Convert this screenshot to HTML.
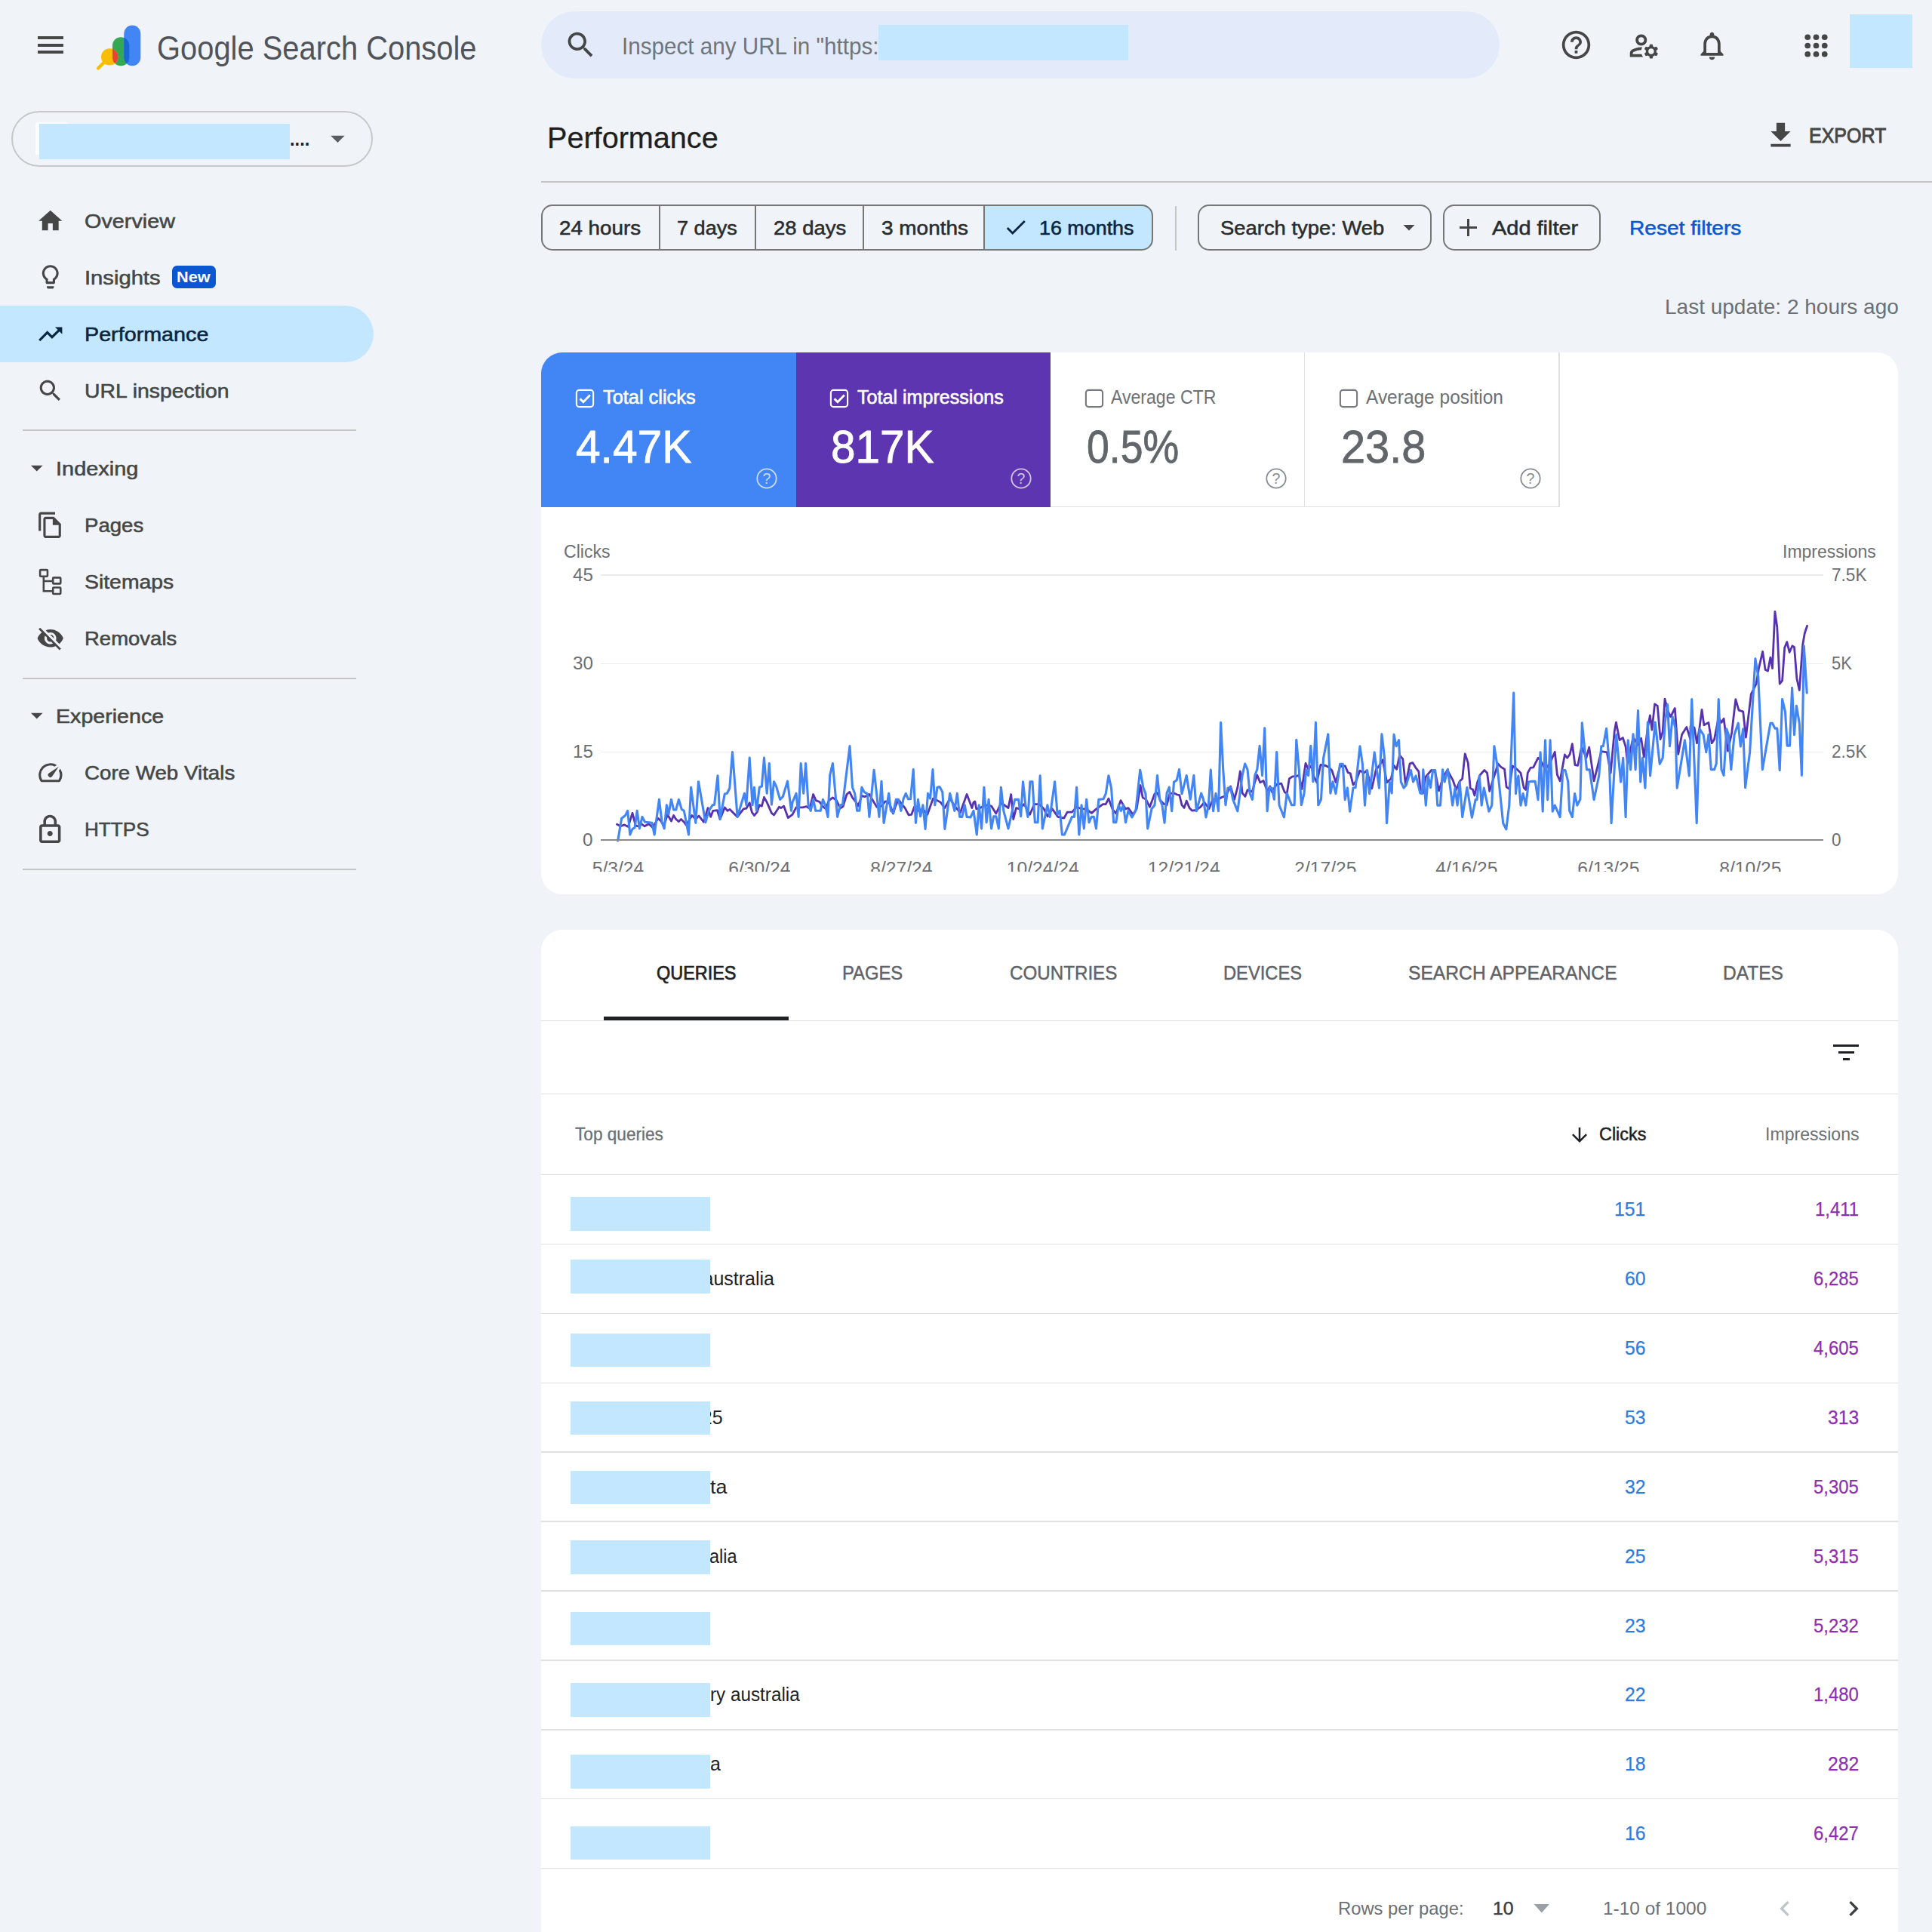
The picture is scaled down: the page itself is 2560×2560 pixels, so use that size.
<!DOCTYPE html>
<html lang="en"><head><meta charset="utf-8"><title>Performance</title>
<style>
html,body{margin:0;padding:0;}
body{width:2560px;height:2560px;overflow:hidden;background:#f0f4f9;position:relative;font-family:'Liberation Sans', sans-serif;}
.t{position:absolute;white-space:pre;line-height:1;transform-origin:0 0;font-family:'Liberation Sans', sans-serif;}
.a{position:absolute;}
svg{position:absolute;overflow:visible;}
</style></head><body>
<div class="a" style="left:50.2px;top:48.4px;width:33.60px;height:4.10px;background:#444746;"></div>
<div class="a" style="left:50.2px;top:57.8px;width:33.60px;height:4.10px;background:#444746;"></div>
<div class="a" style="left:50.2px;top:67.1px;width:33.60px;height:4.10px;background:#444746;"></div>
<svg style="left:120px;top:28px" width="75" height="70" viewBox="120 28 75 70">
<rect x="149" y="49.3" width="22.3" height="38" rx="11.15" fill="#34a853"/>
<rect x="164.3" y="33.5" width="22" height="53.8" rx="11" fill="#4285f4"/>
<clipPath id="cg"><rect x="149" y="49.3" width="22.3" height="38" rx="11.15"/></clipPath>
<rect x="164.3" y="33.5" width="22" height="53.8" rx="11" fill="#1967d2" clip-path="url(#cg)"/>
<line x1="137.5" y1="83" x2="130" y2="90.5" stroke="#fbbc04" stroke-width="4.4" stroke-linecap="round"/>
<circle cx="145.2" cy="75.4" r="11.2" fill="#fbbc04"/>
<circle cx="145.2" cy="75.4" r="11.2" fill="#ea4335" clip-path="url(#cg)"/>
</svg>
<div class="a" style="left:716.5px;top:14.5px;width:1270.30px;height:89.90px;background:#e3ebfb;border-radius:45px;"></div>
<svg style="left:747.20px;top:37.20px" width="45" height="45" viewBox="0 0 24 24"><path fill="#444746"  d="M15.5 14h-.79l-.28-.27C15.41 12.59 16 11.11 16 9.5 16 5.91 13.09 3 9.5 3S3 5.91 3 9.5 5.91 16 9.5 16c1.61 0 3.09-.59 4.23-1.57l.27.28v.79l5 4.99L20.49 19l-4.99-5zm-6 0C7.01 14 5 11.99 5 9.5S7.01 5 9.5 5 14 7.01 14 9.5 11.99 14 9.5 14z"/></svg>
<svg style="left:2065.70px;top:37.30px" width="45" height="45" viewBox="0 0 24 24"><path fill="#444746"  d="M11 18h2v-2h-2v2zm1-16C6.48 2 2 6.48 2 12s4.48 10 10 10 10-4.48 10-10S17.52 2 12 2zm0 18c-4.41 0-8-3.59-8-8s3.59-8 8-8 8 3.59 8 8-3.59 8-8 8zm0-14c-2.21 0-4 1.79-4 4h2c0-1.1.9-2 2-2s2 .9 2 2c0 2-3 1.75-3 5h2c0-2.25 3-2.5 3-5 0-2.21-1.79-4-4-4z"/></svg>
<svg style="left:2156.00px;top:37.50px" width="45" height="45" viewBox="0 0 24 24"><path fill="#444746"  d="M4 18v-.65c0-.34.16-.66.41-.81C6.1 15.53 8.03 15 10 15c.03 0 .05 0 .08.01.1-.7.3-1.37.59-1.98-.22-.02-.44-.03-.67-.03-2.42 0-4.68.67-6.61 1.82-.88.52-1.39 1.5-1.39 2.53V20h9.26c-.42-.6-.75-1.28-.97-2H4zM10 12c2.21 0 4-1.79 4-4s-1.79-4-4-4-4 1.79-4 4 1.79 4 4 4zm0-6c1.1 0 2 .9 2 2s-.9 2-2 2-2-.9-2-2 .9-2 2-2zM20.75 16c0-.22-.03-.42-.06-.63l1.14-1.01-1-1.73-1.45.49c-.32-.27-.68-.48-1.08-.63L18 11h-2l-.3 1.49c-.4.15-.76.36-1.08.63l-1.45-.49-1 1.73 1.14 1.01c-.03.21-.06.41-.06.63s.03.42.06.63l-1.14 1.01 1 1.73 1.45-.49c.32.27.68.48 1.08.63L16 21h2l.3-1.49c.4-.15.76-.36 1.08-.63l1.45.49 1-1.73-1.14-1.01c.03-.21.06-.41.06-.63zM17 18c-1.1 0-2-.9-2-2s.9-2 2-2 2 .9 2 2-.9 2-2 2z"/></svg>
<svg style="left:2245.50px;top:37.50px" width="45" height="45" viewBox="0 0 24 24"><path fill="#444746"  d="M12 22c1.1 0 2-.9 2-2h-4c0 1.1.9 2 2 2zm6-6v-5c0-3.07-1.63-5.64-4.5-6.32V4c0-.83-.67-1.5-1.5-1.5s-1.5.67-1.5 1.5v.68C7.64 5.36 6 7.92 6 11v5l-2 2v1h16v-1l-2-2zm-2 1H8v-6c0-2.48 1.51-4.5 4-4.5s4 2.02 4 4.5v6z"/></svg>
<svg style="left:2384.3px;top:37.8px" width="45" height="45" viewBox="0 0 24 24" fill="#444746"><circle cx="6" cy="6" r="2.05"/><circle cx="6" cy="12" r="2.05"/><circle cx="6" cy="18" r="2.05"/><circle cx="12" cy="6" r="2.05"/><circle cx="12" cy="12" r="2.05"/><circle cx="12" cy="18" r="2.05"/><circle cx="18" cy="6" r="2.05"/><circle cx="18" cy="12" r="2.05"/><circle cx="18" cy="18" r="2.05"/></svg>
<div class="a" style="left:2450.6px;top:18.8px;width:83.40px;height:71.10px;background:#c2e7ff;"></div>
<div class="a" style="left:14.5px;top:146.5px;width:479.00px;height:74.00px;background:transparent;border:2.1px solid #c6c9c8;border-radius:38px;box-sizing:border-box;"></div>
<div class="a" style="left:47.3px;top:161.5px;width:43.20px;height:43.20px;background:rgba(255,255,255,.8);border-radius:3px;"></div>
<svg style="left:436px;top:177px" width="24" height="14" viewBox="436 177 24 14"><path d="M438.2 179.7h18.5l-9.25 9.4z" fill="#5a5d60"/></svg>
<div class="a" style="left:0px;top:405px;width:494.60px;height:74.80px;background:#c2e7ff;border-radius:0 38px 38px 0;"></div>
<div class="a" style="left:228.2px;top:352.4px;width:58.10px;height:30.00px;background:#0b57d0;border-radius:6.5px;"></div>
<svg style="left:48.25px;top:273.95px" width="37.5" height="37.5" viewBox="0 0 24 24"><path fill="#444746"  d="M10 20v-6h4v6h5v-8h3L12 3 2 12h3v8z"/></svg>
<svg style="left:48.25px;top:348.45px" width="37.5" height="37.5" viewBox="0 0 24 24"><path fill="#444746"  d="M9 21c0 .55.45 1 1 1h4c.55 0 1-.45 1-1v-1H9v1zm3-19C8.14 2 5 5.14 5 9c0 2.38 1.19 4.47 3 5.74V17c0 .55.45 1 1 1h6c.55 0 1-.45 1-1v-2.26c1.81-1.27 3-3.36 3-5.74 0-3.86-3.14-7-7-7zm2.85 11.1l-.85.6V16h-4v-2.3l-.85-.6C7.8 12.16 7 10.63 7 9c0-2.76 2.24-5 5-5s5 2.24 5 5c0 1.63-.8 3.16-2.15 4.1z"/></svg>
<svg style="left:48.25px;top:423.55px" width="37.5" height="37.5" viewBox="0 0 24 24"><path fill="#0a2540"  d="M16 6l2.29 2.29-4.88 4.88-4-4L2 16.59 3.41 18l6-6 4 4 6.3-6.29L22 12V6z"/></svg>
<svg style="left:48.25px;top:498.65px" width="37.5" height="37.5" viewBox="0 0 24 24"><path fill="#444746"  d="M15.5 14h-.79l-.28-.27C15.41 12.59 16 11.11 16 9.5 16 5.91 13.09 3 9.5 3S3 5.91 3 9.5 5.91 16 9.5 16c1.61 0 3.09-.59 4.23-1.57l.27.28v.79l5 4.99L20.49 19l-4.99-5zm-6 0C7.01 14 5 11.99 5 9.5S7.01 5 9.5 5 14 7.01 14 9.5 11.99 14 9.5 14z"/></svg>
<div class="a" style="left:30px;top:569.3px;width:441.70px;height:1.80px;background:#c4c7c5;"></div>
<div class="a" style="left:30px;top:898.3px;width:441.70px;height:1.80px;background:#c4c7c5;"></div>
<div class="a" style="left:30px;top:1150.8px;width:441.70px;height:1.80px;background:#c4c7c5;"></div>
<svg style="left:29.55px;top:601.05px" width="37.5" height="37.5" viewBox="0 0 24 24"><path fill="#444746"  d="M7 10l5 5 5-5z"/></svg>
<svg style="left:29.55px;top:929.25px" width="37.5" height="37.5" viewBox="0 0 24 24"><path fill="#444746"  d="M7 10l5 5 5-5z"/></svg>
<svg style="left:48.25px;top:676.95px" width="37.5" height="37.5" viewBox="0 0 24 24"><path fill="#444746"  d="M16 1H4c-1.1 0-2 .9-2 2v14h2V3h12V1zm-1 4H8c-1.1 0-1.99.9-1.99 2L6 21c0 1.1.89 2 1.99 2H19c1.1 0 2-.9 2-2V11l-6-6zM8 21V7h6v5h5v9H8z"/></svg>
<svg style="left:48.25px;top:751.5px" width="37.5" height="37.5" viewBox="0 0 24 24" fill="none" stroke="#444746" stroke-width="1.65">
<rect x="3.27" y="2" width="6.3" height="5.5" rx=".6"/><rect x="14.2" y="8.55" width="6.45" height="5.15" rx=".6"/><rect x="14.2" y="17" width="6.45" height="5.35" rx=".6"/>
<path d="M6.3 7.5v12.5h7.9M6.3 11.5h7.9"/></svg>
<svg style="left:48.25px;top:826.75px" width="37.5" height="37.5" viewBox="0 0 24 24"><path fill="#444746"  d="M12 7c2.76 0 5 2.24 5 5 0 .65-.13 1.26-.36 1.83l2.92 2.92c1.51-1.26 2.7-2.89 3.43-4.75-1.73-4.39-6-7.5-11-7.5-1.4 0-2.74.25-3.98.7l2.16 2.16C10.74 7.13 11.35 7 12 7zM2 4.27l2.28 2.28.46.46C3.08 8.3 1.78 10.02 1 12c1.73 4.39 6 7.5 11 7.5 1.55 0 3.03-.3 4.38-.84l.42.42L19.73 22 21 20.73 3.27 3 2 4.27zM7.53 9.8l1.55 1.55c-.05.21-.08.43-.08.65 0 1.66 1.34 3 3 3 .22 0 .44-.03.65-.08l1.55 1.55c-.67.33-1.41.53-2.2.53-2.76 0-5-2.24-5-5 0-.79.2-1.53.53-2.2zm4.31-.78l3.15 3.15.02-.16c0-1.66-1.34-3-3-3l-.17.01z"/></svg>
<svg style="left:48.25px;top:1004.75px" width="37.5" height="37.5" viewBox="0 0 24 24"><path fill="#444746"  d="M20.38 8.57l-1.23 1.85a8 8 0 0 1-.22 7.58H5.07A8 8 0 0 1 15.58 6.85l1.85-1.23A10 10 0 0 0 3.35 19a2 2 0 0 0 1.72 1h13.85a2 2 0 0 0 1.74-1 10 10 0 0 0-.27-10.44zm-9.79 6.84a2 2 0 0 0 2.83 0l5.66-8.49-8.49 5.66a2 2 0 0 0 0 2.83z"/></svg>
<svg style="left:45.25px;top:1077.85px" width="42.5" height="42.5" viewBox="0 0 24 24"><path fill="#444746"  d="M18 8h-1V6c0-2.76-2.24-5-5-5S7 3.24 7 6v2H6c-1.1 0-2 .9-2 2v10c0 1.1.9 2 2 2h12c1.1 0 2-.9 2-2V10c0-1.1-.9-2-2-2zM9 6c0-1.66 1.34-3 3-3s3 1.34 3 3v2H9V6zm9 14H6V10h12v10zm-6-3c1.1 0 2-.9 2-2s-.9-2-2-2-2 .9-2 2 .9 2 2 2z"/></svg>
<div class="a" style="left:717px;top:240.2px;width:1843.00px;height:1.80px;background:#c4c7c5;"></div>
<div class="a" style="left:1305px;top:272px;width:222.00px;height:59.50px;background:#c2e7ff;border-radius:0 15px 15px 0;"></div>
<div class="a" style="left:716.6px;top:271.2px;width:811.00px;height:61.00px;background:transparent;border:2.1px solid #747775;border-radius:15px;box-sizing:border-box;"></div>
<div class="a" style="left:872.9499999999999px;top:272px;width:1.90px;height:59.50px;background:#747775;"></div>
<div class="a" style="left:999.75px;top:272px;width:1.90px;height:59.50px;background:#747775;"></div>
<div class="a" style="left:1142.85px;top:272px;width:1.90px;height:59.50px;background:#747775;"></div>
<div class="a" style="left:1303.35px;top:272px;width:1.90px;height:59.50px;background:#747775;"></div>
<svg style="left:1329.20px;top:284.10px" width="34" height="34" viewBox="0 0 24 24"><path fill="#0a2540"  d="M9 16.17L4.83 12l-1.42 1.41L9 19 21 7l-1.41-1.41z"/></svg>
<div class="a" style="left:1557.2px;top:272.5px;width:1.70px;height:59.00px;background:#c4c7c5;"></div>
<div class="a" style="left:1587.2px;top:271.2px;width:309.40px;height:61.00px;background:transparent;border:2.1px solid #747775;border-radius:15px;box-sizing:border-box;"></div>
<svg style="left:1848.50px;top:283.20px" width="36" height="36" viewBox="0 0 24 24"><path fill="#444746"  d="M7 10l5 5 5-5z"/></svg>
<div class="a" style="left:1911.8px;top:271.2px;width:209.70px;height:61.00px;background:transparent;border:2.1px solid #747775;border-radius:15px;box-sizing:border-box;"></div>
<div class="a" style="left:1933.6px;top:300.3px;width:23.40px;height:2.80px;background:#444746;"></div>
<div class="a" style="left:1943.9px;top:290px;width:2.80px;height:23.40px;background:#444746;"></div>
<svg style="left:2337.00px;top:157.20px" width="45" height="45" viewBox="0 0 24 24"><path fill="#444746"  d="M19 9h-4V3H9v6H5l7 7 7-7zM5 18v2h14v-2H5z"/></svg>
<div class="a" style="left:717.4px;top:466.7px;width:1797.8px;height:718.3px;background:#fff;border-radius:28px;overflow:hidden;"><div class="a" style="left:0;top:0;width:337.6px;height:205.3px;background:#4285f4"></div><div class="a" style="left:337.6px;top:0;width:337.3px;height:205.3px;background:#5e35b1"></div><div class="a" style="left:674.9px;top:204px;width:674.5px;height:1.6px;background:#e0e0e0"></div><div class="a" style="left:1010.4px;top:0;width:1.6px;height:205.3px;background:#e0e0e0"></div><div class="a" style="left:1347.9px;top:0;width:1.6px;height:205.3px;background:#e0e0e0"></div></div>
<svg style="left:760.6px;top:513.5px" width="28" height="28" viewBox="0 0 28 28" fill="none" stroke="#fff"><rect x="2.9" y="2.9" width="22.2" height="22.2" rx="3.4" stroke-width="2.1"/><path d="M7.6 14.4l4.3 4.3 8.9-9.3" stroke-width="2.9"/></svg>
<svg style="left:1098.1px;top:513.5px" width="28" height="28" viewBox="0 0 28 28" fill="none" stroke="#fff"><rect x="2.9" y="2.9" width="22.2" height="22.2" rx="3.4" stroke-width="2.1"/><path d="M7.6 14.4l4.3 4.3 8.9-9.3" stroke-width="2.9"/></svg>
<svg style="left:1435.6px;top:513.5px" width="28" height="28" viewBox="0 0 28 28" fill="none" stroke="#767a7e"><rect x="2.9" y="2.9" width="22.2" height="22.2" rx="3.4" stroke-width="2.1"/></svg>
<svg style="left:1773.0px;top:513.5px" width="28" height="28" viewBox="0 0 28 28" fill="none" stroke="#767a7e"><rect x="2.9" y="2.9" width="22.2" height="22.2" rx="3.4" stroke-width="2.1"/></svg>
<svg style="left:1000.0px;top:617.6px" width="32" height="32" viewBox="0 0 32 32"><circle cx="16" cy="16" r="12.7" fill="none" stroke="rgba(255,255,255,.72)" stroke-width="1.8"/><text x="16" y="22.8" text-anchor="middle" font-family="Liberation Sans, sans-serif" font-size="19.5" fill="rgba(255,255,255,.72)">?</text></svg>
<svg style="left:1337.0px;top:617.6px" width="32" height="32" viewBox="0 0 32 32"><circle cx="16" cy="16" r="12.7" fill="none" stroke="rgba(255,255,255,.72)" stroke-width="1.8"/><text x="16" y="22.8" text-anchor="middle" font-family="Liberation Sans, sans-serif" font-size="19.5" fill="rgba(255,255,255,.72)">?</text></svg>
<svg style="left:1674.6px;top:617.8px" width="32" height="32" viewBox="0 0 32 32"><circle cx="16" cy="16" r="12.7" fill="none" stroke="#868b90" stroke-width="1.8"/><text x="16" y="22.8" text-anchor="middle" font-family="Liberation Sans, sans-serif" font-size="19.5" fill="#868b90">?</text></svg>
<svg style="left:2012.3px;top:617.8px" width="32" height="32" viewBox="0 0 32 32"><circle cx="16" cy="16" r="12.7" fill="none" stroke="#868b90" stroke-width="1.8"/><text x="16" y="22.8" text-anchor="middle" font-family="Liberation Sans, sans-serif" font-size="19.5" fill="#868b90">?</text></svg>
<div class="a" style="left:796px;top:761.2px;width:1619.60px;height:1.60px;background:#ebebeb;"></div>
<div class="a" style="left:796px;top:878.7px;width:1619.60px;height:1.60px;background:#ebebeb;"></div>
<div class="a" style="left:796px;top:995.7px;width:1619.60px;height:1.60px;background:#ebebeb;"></div>
<svg style="left:0;top:0" width="2560" height="1200" viewBox="0 0 2560 1200" fill="none" stroke-linejoin="round" stroke-linecap="round"><polyline points="817.5,1092.3 822.4,1094.8 827.4,1092.9 832.4,1095.4 838.0,1077.4 842.3,1094.2 846.0,1094.8 849.8,1091.7 854.1,1094.8 859.7,1091.7 864.7,1096.6 872.1,1084.2 875.8,1088.0 879.6,1094.2 884.5,1079.3 889.5,1088.0 892.6,1080.5 895.7,1085.5 899.4,1088.6 902.5,1085.5 906.3,1089.2 909.4,1093.5 916.8,1080.5 921.8,1085.5 926.1,1081.1 932.4,1089.2 938.0,1070.6 941.7,1082.4 944.8,1074.3 950.4,1073.7 954.1,1085.5 960.3,1069.9 964.0,1074.3 967.1,1072.4 977.1,1082.4 985.2,1071.8 988.9,1071.2 993.2,1063.7 996.3,1076.1 999.4,1080.5 1003.2,1076.1 1006.3,1066.8 1009.4,1068.1 1012.5,1056.3 1016.2,1063.1 1022.4,1077.4 1025.5,1079.9 1032.4,1069.3 1034.8,1070.6 1038.6,1068.1 1044.2,1083.6 1050.0,1079.3 1055.0,1069.9 1063.7,1069.9 1068.6,1068.7 1073.0,1071.2 1077.6,1052.5 1081.1,1060.6 1086.0,1062.5 1089.8,1068.1 1094.1,1071.8 1098.4,1060.6 1103.4,1056.9 1108.4,1060.6 1113.4,1071.2 1117.1,1068.7 1122.0,1052.5 1125.8,1049.4 1129.5,1056.9 1134.5,1063.1 1137.0,1068.1 1141.9,1054.4 1145.7,1055.7 1151.9,1052.5 1158.1,1063.1 1161.8,1069.3 1168.0,1068.1 1173.0,1061.9 1178.0,1063.1 1183.5,1078.0 1186.6,1068.1 1190.4,1059.4 1194.1,1064.3 1199.1,1070.6 1204.0,1079.9 1207.8,1079.3 1211.5,1069.3 1216.5,1074.3 1222.7,1071.8 1228.9,1079.3 1236.3,1058.1 1241.9,1060.6 1246.3,1063.1 1251.9,1070.6 1258.7,1058.1 1264.9,1068.1 1272.4,1076.8 1281.1,1052.5 1287.9,1070.6 1290.0,1063.1 1291.9,1061.9 1293.7,1071.8 1298.7,1070.6 1303.7,1068.1 1308.6,1066.8 1313.6,1068.1 1319.8,1078.0 1326.4,1064.3 1331.0,1066.8 1336.0,1070.6 1339.7,1052.5 1342.8,1085.5 1346.5,1070.6 1350.9,1071.8 1357.1,1065.6 1364.5,1079.3 1370.7,1065.6 1377.0,1065.6 1383.2,1071.8 1388.1,1081.7 1394.3,1071.8 1401.8,1082.4 1409.9,1084.2 1414.2,1076.1 1420.4,1076.1 1426.6,1069.3 1432.9,1071.8 1439.1,1071.8 1446.5,1077.4 1452.7,1071.8 1461.4,1065.6 1465.2,1065.6 1468.9,1058.1 1473.9,1071.8 1478.8,1078.0 1485.0,1060.6 1491.2,1071.8 1495.0,1070.6 1501.2,1079.3 1506.1,1071.8 1511.1,1040.7 1514.2,1056.9 1518.6,1059.4 1523.5,1069.3 1530.0,1051.8 1533.7,1050.6 1537.5,1060.5 1542.4,1065.5 1546.1,1066.7 1549.9,1051.8 1554.8,1050.6 1559.8,1053.0 1562.9,1053.7 1566.0,1066.7 1569.1,1070.4 1572.2,1061.1 1576.0,1070.4 1579.7,1074.2 1584.7,1073.5 1590.9,1069.2 1595.8,1063.0 1602.0,1071.7 1607.0,1059.3 1612.0,1060.5 1618.2,1056.8 1624.4,1054.3 1630.6,1041.9 1635.6,1059.3 1639.9,1043.1 1643.3,1022.0 1646.1,1050.6 1649.9,1055.5 1653.0,1046.8 1659.2,1049.3 1662.9,1035.7 1665.8,1027.0 1669.8,1036.9 1674.1,1034.4 1679.1,1048.1 1682.8,1041.9 1685.3,1049.3 1691.5,1039.4 1697.7,1038.1 1702.0,1049.3 1705.2,1051.8 1708.3,1031.9 1712.6,1028.8 1717.6,1028.8 1721.3,1027.0 1725.0,1045.6 1730.0,1011.4 1733.7,1019.5 1737.5,1014.5 1741.2,1029.4 1744.9,1036.9 1749.9,1013.3 1756.7,1014.5 1761.1,1017.0 1764.8,1020.7 1770.0,1036.6 1775.6,1015.5 1782.4,1014.9 1786.1,1023.6 1789.3,1024.8 1793.0,1039.8 1796.7,1035.4 1802.0,1021.1 1807.3,1024.2 1811.0,1021.1 1817.8,1044.7 1823.4,1019.3 1827.1,1015.5 1832.1,1006.8 1837.7,1036.6 1843.3,1031.7 1847.0,1014.3 1850.7,1019.3 1854.5,1000.6 1858.8,1005.6 1862.5,1040.4 1868.1,1011.8 1871.9,1010.6 1875.6,1016.8 1879.9,1022.4 1881.8,1044.1 1885.5,1050.9 1889.3,1029.2 1896.7,1020.5 1901.7,1023.0 1906.6,1047.8 1911.6,1031.7 1917.8,1020.5 1925.3,1034.2 1929.6,1046.6 1934.0,1035.4 1937.7,1031.7 1941.2,998.8 1945.2,1010.6 1948.3,1044.7 1951.4,1046.0 1953.9,1054.0 1957.6,1036.6 1961.3,1026.7 1966.9,1020.5 1970.6,1024.2 1973.7,1048.4 1981.2,1024.2 1984.9,1011.8 1988.6,1016.1 1993.6,1019.3 1996.1,1042.9 1999.8,1045.3 2004.2,1014.9 2010.0,1019.3 2015.0,1024.2 2019.3,1044.1 2021.8,1046.6 2024.3,1024.2 2028.0,1017.4 2031.7,1016.8 2038.0,1004.3 2041.1,1006.8 2047.3,1019.3 2053.5,1011.8 2060.3,996.3 2063.4,1026.7 2067.1,1034.8 2073.4,1000.0 2076.5,1004.3 2080.2,999.4 2083.3,985.7 2087.0,1013.7 2090.7,1014.3 2095.7,989.4 2101.9,1004.3 2105.7,990.1 2112.1,1034.8 2121.8,995.7 2129.3,996.9 2134.2,1024.2 2139.2,969.6 2141.4,957.1 2146.0,980.7 2150.4,977.6 2154.1,989.4 2156.6,1011.8 2164.0,977.0 2170.2,987.0 2174.6,978.3 2178.3,1003.1 2183.3,964.6 2186.4,947.8 2188.9,967.1 2192.6,932.9 2196.3,935.4 2200.1,979.5 2203.2,969.6 2206.0,926.1 2210.0,942.2 2213.7,949.7 2219.3,938.5 2223.7,999.4 2228.6,973.3 2234.8,963.4 2239.8,979.5 2240.0,962.5 2245.1,964.2 2248.5,984.7 2252.0,964.2 2255.0,940.3 2257.9,960.8 2263.9,957.4 2268.2,984.7 2271.6,979.6 2277.2,950.5 2281.0,957.4 2284.1,952.3 2289.5,995.0 2294.7,971.0 2299.8,926.6 2304.0,941.2 2309.7,942.9 2313.4,977.0 2320.3,919.8 2327.1,906.1 2330.5,885.6 2335.6,863.4 2339.1,887.4 2342.5,889.1 2345.9,871.1 2348.5,885.6 2351.9,810.5 2354.8,831.0 2358.2,906.1 2361.6,901.9 2364.7,858.3 2367.8,850.6 2371.2,864.3 2374.9,855.8 2377.5,857.5 2380.9,899.3 2384.3,914.7 2388.6,854.9 2391.2,839.5 2394.6,829.3" stroke="#5632b0" stroke-width="2.8"/><polyline points="818.7,1114.0 823.7,1084.2 826.1,1082.4 828.6,1080.5 831.7,1074.3 834.8,1106.0 838.0,1098.5 841.1,1096.6 844.2,1074.3 847.3,1097.9 851.0,1082.4 854.7,1089.2 859.7,1089.8 864.0,1090.4 867.1,1106.0 873.4,1059.4 877.1,1089.2 880.2,1097.9 883.3,1066.8 885.8,1079.3 889.5,1059.4 892.6,1073.0 895.7,1073.0 899.4,1059.4 903.2,1072.4 906.3,1074.3 912.5,1106.0 915.6,1043.2 921.8,1090.4 925.5,1035.8 934.8,1089.8 939.2,1074.3 944.2,1066.8 946.6,1066.2 951.0,1027.7 954.1,1085.5 960.3,1051.9 963.4,1051.3 966.8,1044.5 970.5,996.6 977.1,1082.4 986.4,1051.3 988.9,1066.8 993.2,1004.1 997.0,1066.8 999.4,1043.2 1002.5,1074.3 1006.3,1043.2 1009.4,1042.0 1012.5,1004.1 1016.2,1051.3 1019.3,1011.6 1022.4,1066.2 1025.5,1035.8 1028.6,1042.0 1033.6,1059.4 1037.3,1055.7 1043.5,1035.2 1048.5,1074.3 1050.0,1063.1 1055.0,1051.3 1058.1,1082.4 1061.2,1011.6 1064.7,1051.3 1067.6,1011.6 1071.1,1066.8 1074.2,1074.3 1077.6,1059.4 1080.8,1074.3 1087.3,1074.3 1090.4,1059.4 1093.5,1066.8 1097.0,1082.4 1099.7,1027.1 1103.4,1011.6 1109.6,1082.4 1113.4,1066.8 1116.5,1066.2 1126.0,988.6 1129.5,1043.2 1132.6,1051.3 1135.7,1074.3 1138.8,1074.3 1141.9,1043.2 1145.0,1049.4 1149.4,1051.9 1151.9,1082.4 1158.1,1020.2 1164.9,1082.4 1168.0,1035.2 1171.1,1090.4 1177.7,1051.3 1180.4,1074.3 1183.5,1076.8 1187.3,1059.4 1190.4,1059.4 1193.9,1074.3 1197.2,1058.1 1200.3,1051.3 1203.4,1058.8 1206.5,1058.8 1210.2,1019.6 1213.4,1090.4 1216.5,1059.4 1219.6,1081.7 1222.9,1066.8 1226.1,1098.5 1229.5,1051.3 1232.6,1058.1 1236.0,1019.6 1238.8,1066.8 1241.9,1043.2 1245.0,1042.6 1248.8,1049.4 1251.9,1098.5 1258.7,1051.3 1264.9,1074.3 1268.3,1051.3 1271.7,1082.4 1274.8,1082.4 1278.3,1066.8 1281.1,1082.4 1286.0,1083.0 1290.0,1074.3 1294.3,1106.0 1297.2,1066.8 1300.6,1097.9 1303.9,1043.2 1307.1,1089.8 1310.1,1059.4 1313.6,1097.9 1316.7,1081.7 1319.8,1081.7 1323.3,1097.9 1326.4,1043.2 1329.8,1074.3 1336.0,1097.9 1344.7,1059.4 1349.6,1059.4 1352.7,1081.7 1355.5,1035.8 1358.9,1066.8 1362.0,1082.4 1364.9,1035.8 1368.0,1035.8 1371.4,1089.8 1375.1,1089.8 1378.2,1027.7 1381.3,1097.9 1387.9,1066.8 1391.2,1082.4 1397.6,1035.8 1401.2,1079.3 1404.3,1074.3 1407.4,1106.0 1410.5,1106.0 1420.4,1082.4 1423.5,1082.4 1426.6,1043.2 1429.8,1106.0 1433.1,1066.8 1436.3,1097.9 1439.7,1059.4 1443.0,1089.8 1446.3,1082.4 1449.4,1082.4 1452.5,1097.9 1455.8,1059.4 1462.0,1058.8 1465.2,1051.9 1468.9,1027.7 1472.6,1044.5 1475.7,1089.8 1478.8,1089.8 1482.3,1066.8 1485.4,1074.3 1488.5,1066.8 1491.5,1089.8 1495.0,1074.3 1499.9,1083.0 1504.9,1074.3 1510.7,1020.2 1514.8,1043.2 1518.0,1051.9 1520.7,1097.9 1526.0,1071.8 1530.0,1066.7 1533.5,1027.6 1536.8,1059.3 1539.9,1066.7 1543.0,1090.3 1546.1,1050.6 1549.3,1043.1 1552.7,1074.8 1555.5,1036.3 1559.2,1033.8 1562.5,1019.5 1566.0,1051.8 1572.2,1027.6 1577.2,1059.3 1581.9,1027.6 1585.3,1074.8 1591.7,1051.2 1594.6,1059.3 1598.0,1082.9 1601.4,1066.7 1604.3,1020.1 1607.6,1074.8 1611.0,1051.2 1614.5,1074.8 1617.6,957.4 1620.7,1019.5 1624.0,1066.7 1626.9,1044.3 1630.4,1043.1 1633.7,1059.3 1639.9,1074.8 1646.1,1027.6 1649.6,1012.0 1653.0,1019.5 1656.1,1051.2 1659.4,1059.3 1662.7,1027.6 1665.8,1019.5 1669.1,988.4 1672.6,1027.6 1675.7,964.8 1679.1,1074.8 1682.2,1043.1 1685.3,1044.3 1688.4,1059.3 1691.7,996.5 1695.0,1066.7 1701.4,1082.9 1705.2,1051.2 1711.4,1066.7 1715.1,1066.7 1717.8,980.4 1721.3,1020.1 1724.4,1066.7 1728.1,1051.2 1730.6,1020.1 1733.7,1027.6 1736.8,988.4 1739.9,1035.7 1743.4,957.4 1746.8,1066.7 1750.5,1059.3 1753.6,1004.6 1759.8,972.9 1762.9,1051.2 1766.0,1035.7 1770.0,1051.6 1775.6,1012.4 1779.3,1012.4 1782.2,1059.6 1785.5,1044.1 1788.6,1075.2 1793.0,1044.1 1796.1,1043.5 1802.0,988.8 1805.4,1012.4 1808.5,1067.1 1811.6,1020.5 1814.7,1051.6 1821.2,996.9 1827.4,1044.1 1830.9,972.7 1834.6,1004.3 1837.5,1090.7 1841.4,1036.0 1844.2,1050.9 1847.0,973.3 1850.1,988.8 1853.5,980.7 1856.3,1036.0 1860.1,1044.1 1863.2,1040.4 1869.4,1020.5 1872.5,1036.0 1876.2,1028.0 1881.8,1050.9 1884.3,1051.6 1885.8,1019.9 1889.3,1067.1 1892.4,1028.0 1895.5,1043.5 1898.6,1020.5 1901.7,1020.5 1904.8,1067.1 1908.5,1067.1 1911.6,1019.9 1914.1,1036.0 1918.4,1019.3 1924.7,1067.1 1928.0,1044.1 1931.1,1067.1 1934.2,1036.0 1937.7,1082.6 1943.9,1043.5 1950.4,1083.2 1955.1,1059.6 1957.0,1059.6 1960.3,1028.0 1963.2,1067.1 1966.3,1044.1 1972.9,1075.2 1976.8,1067.1 1979.9,988.8 1983.7,1012.4 1991.7,1090.7 1995.8,1098.8 1999.8,1067.1 2005.7,918.0 2008.5,1051.6 2010.0,1036.6 2011.9,1028.0 2015.0,1067.1 2018.1,1051.6 2021.8,1067.1 2025.5,1036.0 2028.6,1035.4 2034.2,1035.4 2038.0,1059.6 2041.1,996.9 2044.2,1075.2 2047.5,980.7 2050.7,1059.6 2054.1,980.7 2057.2,1075.2 2060.3,1067.1 2067.1,1082.6 2070.9,1020.5 2074.0,1020.5 2077.7,1035.4 2079.6,1073.9 2083.3,1082.6 2086.6,1051.6 2089.9,1067.1 2093.9,1059.0 2096.3,957.8 2102.5,1019.9 2106.3,1019.9 2112.1,1059.6 2118.7,1028.0 2121.8,988.8 2124.3,988.8 2128.6,965.2 2132.4,1011.8 2135.1,1090.7 2141.7,973.3 2147.6,1036.0 2150.7,1004.3 2154.1,1082.6 2157.2,980.7 2160.6,1019.9 2164.0,972.7 2167.1,1019.9 2170.5,941.6 2173.7,1036.0 2176.5,1004.3 2179.9,1044.1 2183.3,957.1 2186.6,1028.0 2193.2,957.1 2199.2,1012.4 2203.2,1004.3 2206.3,957.1 2209.6,933.5 2212.5,988.8 2216.2,949.7 2219.9,964.6 2222.2,1044.1 2232.4,980.7 2238.3,1028.0 2241.7,926.6 2248.2,1090.6 2252.0,965.9 2257.1,973.6 2260.8,996.7 2263.9,973.6 2267.3,1019.7 2271.6,1019.7 2274.2,1012.0 2277.2,926.6 2281.0,1019.7 2284.1,1027.4 2287.8,965.9 2290.4,973.6 2293.8,1019.7 2298.1,973.6 2303.2,958.2 2306.3,989.0 2309.7,965.9 2312.6,1043.6 2318.6,996.7 2325.9,872.8 2329.7,895.9 2335.3,1019.7 2345.9,958.2 2348.5,958.2 2351.9,965.1 2354.8,965.1 2358.2,1020.6 2361.6,926.6 2365.5,942.9 2368.1,988.1 2371.5,988.1 2374.6,911.3 2377.5,973.6 2380.4,935.2 2384.3,958.2 2387.4,1027.4 2390.3,855.8 2394.2,918.1" stroke="#4285f4" stroke-width="3.1"/></svg>
<div class="a" style="left:796px;top:1111.5px;width:1619.60px;height:2.00px;background:#8a8a8a;"></div>
<div class="a" style="left:0;top:1139.7px;width:2560px;height:15.3px;overflow:hidden;"><div style="position:absolute;left:719px;width:200px;top:0;text-align:center;font-size:23px;line-height:1;color:#6b6f73;"><span style="display:inline-block;transform:scaleX(1.07)">5/3/24</span></div><div style="position:absolute;left:906px;width:200px;top:0;text-align:center;font-size:23px;line-height:1;color:#6b6f73;"><span style="display:inline-block;transform:scaleX(1.07)">6/30/24</span></div><div style="position:absolute;left:1094px;width:200px;top:0;text-align:center;font-size:23px;line-height:1;color:#6b6f73;"><span style="display:inline-block;transform:scaleX(1.07)">8/27/24</span></div><div style="position:absolute;left:1281.5px;width:200px;top:0;text-align:center;font-size:23px;line-height:1;color:#6b6f73;"><span style="display:inline-block;transform:scaleX(1.07)">10/24/24</span></div><div style="position:absolute;left:1469px;width:200px;top:0;text-align:center;font-size:23px;line-height:1;color:#6b6f73;"><span style="display:inline-block;transform:scaleX(1.07)">12/21/24</span></div><div style="position:absolute;left:1656px;width:200px;top:0;text-align:center;font-size:23px;line-height:1;color:#6b6f73;"><span style="display:inline-block;transform:scaleX(1.07)">2/17/25</span></div><div style="position:absolute;left:1843.6px;width:200px;top:0;text-align:center;font-size:23px;line-height:1;color:#6b6f73;"><span style="display:inline-block;transform:scaleX(1.07)">4/16/25</span></div><div style="position:absolute;left:2031px;width:200px;top:0;text-align:center;font-size:23px;line-height:1;color:#6b6f73;"><span style="display:inline-block;transform:scaleX(1.07)">6/13/25</span></div><div style="position:absolute;left:2219px;width:200px;top:0;text-align:center;font-size:23px;line-height:1;color:#6b6f73;"><span style="display:inline-block;transform:scaleX(1.07)">8/10/25</span></div></div>
<div class="a" style="left:717.4px;top:1232.2px;width:1797.80px;height:1367.80px;background:#fff;border-radius:28px 28px 0 0;"></div>
<div class="a" style="left:800.4px;top:1347px;width:244.90px;height:4.60px;background:#202124;"></div>
<div class="a" style="left:717.4px;top:1351.8px;width:1797.80px;height:1.60px;background:#e0e0e0;"></div>
<div class="a" style="left:717.4px;top:1448.9px;width:1797.80px;height:1.60px;background:#e0e0e0;"></div>
<div class="a" style="left:717.4px;top:1555.8px;width:1797.80px;height:1.60px;background:#e0e0e0;"></div>
<div class="a" style="left:717.4px;top:1647.7px;width:1797.80px;height:1.60px;background:#e0e0e0;"></div>
<div class="a" style="left:717.4px;top:1739.6px;width:1797.80px;height:1.60px;background:#e0e0e0;"></div>
<div class="a" style="left:717.4px;top:1831.5px;width:1797.80px;height:1.60px;background:#e0e0e0;"></div>
<div class="a" style="left:717.4px;top:1923.3999999999999px;width:1797.80px;height:1.60px;background:#e0e0e0;"></div>
<div class="a" style="left:717.4px;top:2015.3px;width:1797.80px;height:1.60px;background:#e0e0e0;"></div>
<div class="a" style="left:717.4px;top:2107.2px;width:1797.80px;height:1.60px;background:#e0e0e0;"></div>
<div class="a" style="left:717.4px;top:2199.1px;width:1797.80px;height:1.60px;background:#e0e0e0;"></div>
<div class="a" style="left:717.4px;top:2291.0px;width:1797.80px;height:1.60px;background:#e0e0e0;"></div>
<div class="a" style="left:717.4px;top:2382.8999999999996px;width:1797.80px;height:1.60px;background:#e0e0e0;"></div>
<div class="a" style="left:717.4px;top:2474.7999999999997px;width:1797.80px;height:1.60px;background:#e0e0e0;"></div>
<div class="a" style="left:2429px;top:1383.6px;width:34.00px;height:3.30px;background:#202124;"></div>
<div class="a" style="left:2435.5px;top:1392.9px;width:21.00px;height:3.30px;background:#202124;"></div>
<div class="a" style="left:2441.5px;top:1402.2px;width:9.00px;height:3.30px;background:#202124;"></div>
<svg style="left:2078.40px;top:1488.70px" width="30" height="30" viewBox="0 0 24 24"><path fill="#202124"  d="M20 12l-1.41-1.41L13 16.17V4h-2v12.17l-5.58-5.59L4 12l8 8 8-8z"/></svg>
<svg style="left:2030px;top:2520px" width="26" height="18" viewBox="2030 2520 26 18"><path d="M2032.6 2523h20.4l-10.2 11.5z" fill="#9aa0a6"/></svg>
<svg style="left:2345.00px;top:2509.30px" width="40" height="40" viewBox="0 0 24 24"><path fill="#c1c5ca"  d="M15.41 7.41L14 6l-6 6 6 6 1.41-1.41L10.83 12z"/></svg>
<svg style="left:2435.80px;top:2509.30px" width="40" height="40" viewBox="0 0 24 24"><path fill="#3c4043"  d="M10 6L8.59 7.41 13.17 12l-4.58 4.59L10 18l6-6z"/></svg>
<div class="t" style="left:207.8px;top:42.9px;font-size:43.5px;color:#50545a;transform:scaleX(0.9169);">Google Search Console</div>
<div class="t" style="left:823.8px;top:45.6px;font-size:30.5px;color:#70757a;transform:scaleX(0.9716);">Inspect any URL in &quot;https:</div>
<div class="t" style="left:111.8px;top:279.8px;font-size:26.4px;color:#444746;transform:scaleX(1.0909);-webkit-text-stroke:0.55px #444746;">Overview</div>
<div class="t" style="left:111.8px;top:354.7px;font-size:26.4px;color:#444746;transform:scaleX(1.1058);-webkit-text-stroke:0.55px #444746;">Insights</div>
<div class="t" style="left:234.3px;top:357.2px;font-size:20.8px;color:#fff;transform:scaleX(1.0420);font-weight:700;">New</div>
<div class="t" style="left:111.8px;top:429.6px;font-size:26.4px;color:#0a2540;transform:scaleX(1.0880);-webkit-text-stroke:0.55px #0a2540;">Performance</div>
<div class="t" style="left:111.8px;top:504.5px;font-size:26.4px;color:#444746;transform:scaleX(1.0758);-webkit-text-stroke:0.55px #444746;">URL inspection</div>
<div class="t" style="left:73.8px;top:607.8px;font-size:26.4px;color:#444746;transform:scaleX(1.0962);-webkit-text-stroke:0.55px #444746;">Indexing</div>
<div class="t" style="left:111.5px;top:682.8px;font-size:26.4px;color:#444746;transform:scaleX(1.0459);-webkit-text-stroke:0.55px #444746;">Pages</div>
<div class="t" style="left:111.5px;top:757.8px;font-size:26.4px;color:#444746;transform:scaleX(1.0751);-webkit-text-stroke:0.55px #444746;">Sitemaps</div>
<div class="t" style="left:111.5px;top:832.8px;font-size:26.4px;color:#444746;transform:scaleX(1.0422);-webkit-text-stroke:0.55px #444746;">Removals</div>
<div class="t" style="left:73.6px;top:936.0px;font-size:26.4px;color:#444746;transform:scaleX(1.0844);-webkit-text-stroke:0.55px #444746;">Experience</div>
<div class="t" style="left:111.5px;top:1011.0px;font-size:26.4px;color:#444746;transform:scaleX(1.0504);-webkit-text-stroke:0.55px #444746;">Core Web Vitals</div>
<div class="t" style="left:111.5px;top:1086.0px;font-size:26.4px;color:#444746;transform:scaleX(0.9903);-webkit-text-stroke:0.55px #444746;">HTTPS</div>
<div class="t" style="left:383.8px;top:171.0px;font-size:26px;color:#1f1f1f;transform:scaleX(0.9116);font-weight:700;">....</div>
<div class="t" style="left:724.8px;top:162.7px;font-size:39px;color:#1f1f1f;transform:scaleX(1.0154);-webkit-text-stroke:0.3px #1f1f1f;">Performance</div>
<div class="t" style="left:2396.8px;top:166.5px;font-size:26.8px;color:#444746;transform:scaleX(0.9334);-webkit-text-stroke:0.9px #444746;">EXPORT</div>
<div class="t" style="left:741.2px;top:289.3px;font-size:26.6px;color:#2a2c2e;transform:scaleX(1.0444);-webkit-text-stroke:0.55px #2a2c2e;">24 hours</div>
<div class="t" style="left:897.3px;top:289.3px;font-size:26.6px;color:#2a2c2e;transform:scaleX(1.0196);-webkit-text-stroke:0.55px #2a2c2e;">7 days</div>
<div class="t" style="left:1024.8px;top:289.3px;font-size:26.6px;color:#2a2c2e;transform:scaleX(1.0337);-webkit-text-stroke:0.55px #2a2c2e;">28 days</div>
<div class="t" style="left:1168.0px;top:289.3px;font-size:26.6px;color:#2a2c2e;transform:scaleX(1.0512);-webkit-text-stroke:0.55px #2a2c2e;">3 months</div>
<div class="t" style="left:1377.3px;top:289.3px;font-size:26.6px;color:#0a2540;transform:scaleX(1.0105);-webkit-text-stroke:0.55px #0a2540;">16 months</div>
<div class="t" style="left:1616.5px;top:289.3px;font-size:26.6px;color:#2a2c2e;transform:scaleX(1.0303);-webkit-text-stroke:0.55px #2a2c2e;">Search type: Web</div>
<div class="t" style="left:1976.6px;top:289.3px;font-size:26.6px;color:#2a2c2e;transform:scaleX(1.0881);-webkit-text-stroke:0.55px #2a2c2e;">Add filter</div>
<div class="t" style="left:2158.8px;top:289.3px;font-size:26.6px;color:#0b57d0;transform:scaleX(1.0569);-webkit-text-stroke:0.55px #0b57d0;">Reset filters</div>
<div class="t" style="left:2206.0px;top:393.0px;font-size:27.2px;color:#6b7075;transform:scaleX(1.0299);">Last update: 2 hours ago</div>
<div class="t" style="left:798.5px;top:513.8px;font-size:25px;color:#fff;transform:scaleX(1.0141);-webkit-text-stroke:0.6px #fff;">Total clicks</div>
<div class="t" style="left:763.4px;top:560.7px;font-size:62px;color:#fff;transform:scaleX(0.9461);-webkit-text-stroke:0.9px #fff;">4.47K</div>
<div class="t" style="left:1135.5px;top:513.8px;font-size:25px;color:#fff;transform:scaleX(1.0038);-webkit-text-stroke:0.6px #fff;">Total impressions</div>
<div class="t" style="left:1101.4px;top:560.7px;font-size:62px;color:#fff;transform:scaleX(0.9433);-webkit-text-stroke:0.9px #fff;">817K</div>
<div class="t" style="left:1472.4px;top:513.8px;font-size:25px;color:#6b7075;transform:scaleX(0.9230);">Average CTR</div>
<div class="t" style="left:1439.8px;top:560.7px;font-size:62px;color:#62666a;transform:scaleX(0.8647);-webkit-text-stroke:0.8px #62666a;">0.5%</div>
<div class="t" style="left:1809.9px;top:513.8px;font-size:25px;color:#6b7075;transform:scaleX(0.9790);">Average position</div>
<div class="t" style="left:1776.7px;top:560.7px;font-size:62px;color:#62666a;transform:scaleX(0.9306);-webkit-text-stroke:0.8px #62666a;">23.8</div>
<div class="t" style="left:746.8px;top:719.5px;font-size:23px;color:#6b6f73;transform:scaleX(1.0030);">Clicks</div>
<div class="t" style="left:2362.0px;top:719.5px;font-size:23px;color:#6b6f73;transform:scaleX(0.9979);">Impressions</div>
<div class="t" style="left:758.8px;top:750.8px;font-size:23px;color:#6b6f73;transform:scaleX(1.0520);">45</div>
<div class="t" style="left:758.8px;top:868.3px;font-size:23px;color:#6b6f73;transform:scaleX(1.0520);">30</div>
<div class="t" style="left:758.8px;top:985.3px;font-size:23px;color:#6b6f73;transform:scaleX(1.0520);">15</div>
<div class="t" style="left:772.2px;top:1101.8px;font-size:23px;color:#6b6f73;transform:scaleX(1.0569);">0</div>
<div class="t" style="left:2426.8px;top:750.8px;font-size:23px;color:#6b6f73;transform:scaleX(0.9830);">7.5K</div>
<div class="t" style="left:2426.8px;top:868.3px;font-size:23px;color:#6b6f73;transform:scaleX(0.9568);">5K</div>
<div class="t" style="left:2426.8px;top:985.3px;font-size:23px;color:#6b6f73;transform:scaleX(0.9830);">2.5K</div>
<div class="t" style="left:2426.8px;top:1101.8px;font-size:23px;color:#6b6f73;transform:scaleX(0.9788);">0</div>
<div class="t" style="left:869.9px;top:1277.4px;font-size:25px;color:#202124;transform:scaleX(0.9373);-webkit-text-stroke:0.7px #202124;">QUERIES</div>
<div class="t" style="left:1116.3px;top:1277.4px;font-size:25px;color:#5f6368;transform:scaleX(0.9511);-webkit-text-stroke:0.45px #5f6368;">PAGES</div>
<div class="t" style="left:1338.4px;top:1277.4px;font-size:25px;color:#5f6368;transform:scaleX(0.9670);-webkit-text-stroke:0.45px #5f6368;">COUNTRIES</div>
<div class="t" style="left:1621.3px;top:1277.4px;font-size:25px;color:#5f6368;transform:scaleX(0.9482);-webkit-text-stroke:0.45px #5f6368;">DEVICES</div>
<div class="t" style="left:1865.9px;top:1277.4px;font-size:25px;color:#5f6368;transform:scaleX(0.9855);-webkit-text-stroke:0.45px #5f6368;">SEARCH APPEARANCE</div>
<div class="t" style="left:2282.9px;top:1277.4px;font-size:25px;color:#5f6368;transform:scaleX(0.9801);-webkit-text-stroke:0.45px #5f6368;">DATES</div>
<div class="t" style="left:762.4px;top:1491.5px;font-size:23px;color:#6b7075;transform:scaleX(0.9832);-webkit-text-stroke:0.3px #6b7075;">Top queries</div>
<div class="t" style="left:2119.0px;top:1491.5px;font-size:23px;color:#202124;transform:scaleX(1.0160);-webkit-text-stroke:0.5px #202124;">Clicks</div>
<div class="t" style="left:2339.0px;top:1491.5px;font-size:23px;color:#6b7075;transform:scaleX(1.0044);">Impressions</div>
<div class="t" style="left:2139.3px;top:1590.1px;font-size:25px;color:#2b7de0;transform:scaleX(0.9900);-webkit-text-stroke:0.25px #2b7de0;">151</div>
<div class="t" style="left:2404.9px;top:1590.1px;font-size:25px;color:#8c2fb0;transform:scaleX(0.9550);-webkit-text-stroke:0.25px #8c2fb0;">1,411</div>
<div class="t" style="left:2153.1px;top:1682.0px;font-size:25px;color:#2b7de0;transform:scaleX(0.9900);-webkit-text-stroke:0.25px #2b7de0;">60</div>
<div class="t" style="left:2403.2px;top:1682.0px;font-size:25px;color:#8c2fb0;transform:scaleX(0.9550);-webkit-text-stroke:0.25px #8c2fb0;">6,285</div>
<div class="t" style="left:2153.1px;top:1773.9px;font-size:25px;color:#2b7de0;transform:scaleX(0.9900);-webkit-text-stroke:0.25px #2b7de0;">56</div>
<div class="t" style="left:2403.2px;top:1773.9px;font-size:25px;color:#8c2fb0;transform:scaleX(0.9550);-webkit-text-stroke:0.25px #8c2fb0;">4,605</div>
<div class="t" style="left:2153.1px;top:1865.8px;font-size:25px;color:#2b7de0;transform:scaleX(0.9900);-webkit-text-stroke:0.25px #2b7de0;">53</div>
<div class="t" style="left:2421.6px;top:1865.8px;font-size:25px;color:#8c2fb0;transform:scaleX(0.9900);-webkit-text-stroke:0.25px #8c2fb0;">313</div>
<div class="t" style="left:2153.1px;top:1957.7px;font-size:25px;color:#2b7de0;transform:scaleX(0.9900);-webkit-text-stroke:0.25px #2b7de0;">32</div>
<div class="t" style="left:2403.2px;top:1957.7px;font-size:25px;color:#8c2fb0;transform:scaleX(0.9550);-webkit-text-stroke:0.25px #8c2fb0;">5,305</div>
<div class="t" style="left:2153.1px;top:2049.6px;font-size:25px;color:#2b7de0;transform:scaleX(0.9900);-webkit-text-stroke:0.25px #2b7de0;">25</div>
<div class="t" style="left:2403.2px;top:2049.6px;font-size:25px;color:#8c2fb0;transform:scaleX(0.9550);-webkit-text-stroke:0.25px #8c2fb0;">5,315</div>
<div class="t" style="left:2153.1px;top:2141.5px;font-size:25px;color:#2b7de0;transform:scaleX(0.9900);-webkit-text-stroke:0.25px #2b7de0;">23</div>
<div class="t" style="left:2403.2px;top:2141.5px;font-size:25px;color:#8c2fb0;transform:scaleX(0.9550);-webkit-text-stroke:0.25px #8c2fb0;">5,232</div>
<div class="t" style="left:2153.1px;top:2233.4px;font-size:25px;color:#2b7de0;transform:scaleX(0.9900);-webkit-text-stroke:0.25px #2b7de0;">22</div>
<div class="t" style="left:2403.2px;top:2233.4px;font-size:25px;color:#8c2fb0;transform:scaleX(0.9550);-webkit-text-stroke:0.25px #8c2fb0;">1,480</div>
<div class="t" style="left:2153.1px;top:2325.3px;font-size:25px;color:#2b7de0;transform:scaleX(0.9900);-webkit-text-stroke:0.25px #2b7de0;">18</div>
<div class="t" style="left:2421.6px;top:2325.3px;font-size:25px;color:#8c2fb0;transform:scaleX(0.9900);-webkit-text-stroke:0.25px #8c2fb0;">282</div>
<div class="t" style="left:2153.1px;top:2417.2px;font-size:25px;color:#2b7de0;transform:scaleX(0.9900);-webkit-text-stroke:0.25px #2b7de0;">16</div>
<div class="t" style="left:2403.2px;top:2417.2px;font-size:25px;color:#8c2fb0;transform:scaleX(0.9550);-webkit-text-stroke:0.25px #8c2fb0;">6,427</div>
<div class="t" style="left:931.5px;top:1682.0px;font-size:25px;color:#202124;transform:scaleX(1.0000);">australia</div>
<div class="t" style="left:929.8px;top:1865.8px;font-size:25px;color:#202124;transform:scaleX(1.0000);">25</div>
<div class="t" style="left:941.2px;top:1957.7px;font-size:25px;color:#202124;transform:scaleX(1.0727);">ta</div>
<div class="t" style="left:940.2px;top:2049.6px;font-size:25px;color:#202124;transform:scaleX(0.9397);">alia</div>
<div class="t" style="left:940.7px;top:2233.4px;font-size:25px;color:#202124;transform:scaleX(0.9706);">ry australia</div>
<div class="t" style="left:940.9px;top:2325.3px;font-size:25px;color:#202124;transform:scaleX(0.9978);">a</div>
<div class="t" style="left:1772.9px;top:2516.5px;font-size:24.5px;color:#6b7075;transform:scaleX(0.9704);">Rows per page:</div>
<div class="t" style="left:1977.5px;top:2516.5px;font-size:24.5px;color:#3c4043;transform:scaleX(1.0136);-webkit-text-stroke:0.5px #3c4043;">10</div>
<div class="t" style="left:2123.5px;top:2516.5px;font-size:24.5px;color:#6b7075;transform:scaleX(0.9974);">1-10 of 1000</div>
<div class="a" style="left:1163.8px;top:33px;width:331.70px;height:47.20px;background:#c2e7ff;"></div>
<div class="a" style="left:51.8px;top:163.8px;width:332.20px;height:47.10px;background:#c2e7ff;"></div>
<div class="a" style="left:756px;top:1586px;width:185.00px;height:44.60px;background:#c2e7ff;"></div>
<div class="a" style="left:756px;top:1669px;width:185.00px;height:44.50px;background:#c2e7ff;"></div>
<div class="a" style="left:756px;top:1766.5px;width:185.00px;height:44.30px;background:#c2e7ff;"></div>
<div class="a" style="left:756px;top:1856.5px;width:185.00px;height:44.30px;background:#c2e7ff;"></div>
<div class="a" style="left:756px;top:1948.5px;width:185.00px;height:44.30px;background:#c2e7ff;"></div>
<div class="a" style="left:756px;top:2041px;width:185.00px;height:44.70px;background:#c2e7ff;"></div>
<div class="a" style="left:756px;top:2135.5px;width:185.00px;height:44.80px;background:#c2e7ff;"></div>
<div class="a" style="left:756px;top:2230.4px;width:185.00px;height:44.60px;background:#c2e7ff;"></div>
<div class="a" style="left:756px;top:2324.8px;width:185.00px;height:44.80px;background:#c2e7ff;"></div>
<div class="a" style="left:756px;top:2419.7px;width:185.00px;height:44.80px;background:#c2e7ff;"></div>
</body></html>
